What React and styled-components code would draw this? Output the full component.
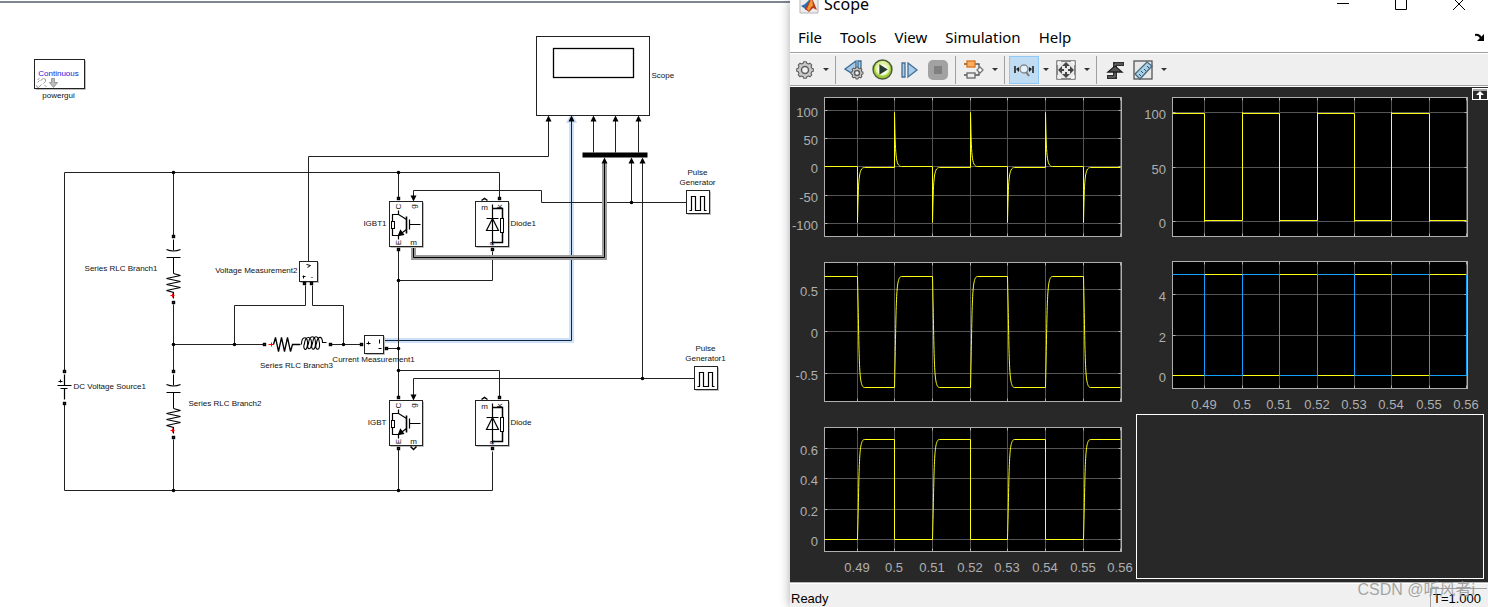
import React from 'react';
import styled, { createGlobalStyle } from 'styled-components';

const GlobalStyle = createGlobalStyle`
  * {
    box-sizing: border-box;
  }

  body {
    margin: 0;
    background: #ffffff;
    color: #000000;
    font-family: 'Noto Sans', 'Open Sans', sans-serif;
  }

  button {
    margin: 0;
    padding: 0;
    border: none;
    background: none;
    color: inherit;
    font: inherit;
  }
`;

const Desktop = styled.div`
  display: grid;
  grid-template-columns: 790fr 698fr;
  min-height: 100vh;
  overflow: hidden;
`;

const ModelPane = styled.main`
  min-width: 0;
  padding-top: 1px;
  background: #ffffff;
`;

const PaneRule = styled.div`
  height: 2px;
  background: #7e8690;
`;

const Drawing = styled.svg`
  display: block;
  width: 100%;
  height: auto;
  fill: none;
  stroke: #000000;
  stroke-width: 1;

  text {
    fill: #111111;
    stroke: none;
    font-family: 'Liberation Sans', Arial, sans-serif;
    font-size: 8px;
  }

  .mode {
    fill: #1a1ad6;
  }
`;

const ScopeWindow = styled.section`
  position: relative;
  display: flex;
  flex-direction: column;
  min-width: 0;
  background: #ffffff;
  box-shadow: 0 0 10px rgba(0, 0, 0, 0.35);
`;

const TitleBar = styled.header`
  display: flex;
  align-items: flex-start;
  height: 22px;
  padding-left: 9px;
`;

const WindowTitle = styled.h1`
  flex: 1;
  margin: 0 0 0 5px;
  font-size: 16px;
  font-weight: 400;
  line-height: 8px;
`;

const WindowButton = styled.button`
  display: flex;
  justify-content: center;
  width: 58px;
  height: 12px;
`;

const MenuBar = styled.nav`
  display: flex;
  align-items: center;
  gap: 18px;
  height: 30px;
  padding: 0 3px 0 8px;
  font-size: 15px;
`;

const MenuButton = styled.button`
  line-height: 20px;
`;

const DockButton = styled.button`
  display: flex;
  margin-left: auto;
`;

const Toolbar = styled.div`
  display: flex;
  align-items: center;
  height: 35px;
  padding-left: 1px;
  background: #efefef;
  border-top: 1px solid #a0a0a0;
  border-bottom: 1px solid #ffffff;
  box-shadow: inset 0 1px #ffffff, inset 0 -1px #a0a0a0;
`;

const ToolButton = styled.button`
  display: flex;
  align-items: center;
  justify-content: center;
  width: ${({ $active }) => ($active ? '30px' : '28px')};
  height: 28px;
  background: ${({ $active }) => ($active ? '#c0dcf3' : 'transparent')};
  border: ${({ $active }) => ($active ? '1px solid #90c8f6' : 'none')};
`;

const CaretButton = styled.button`
  width: 13px;
  height: 28px;

  &::after {
    content: '';
    display: block;
    width: 0;
    margin: 0 auto;
    border: 3px solid transparent;
    border-top-color: #333333;
    border-bottom: none;
  }
`;

const Separator = styled.span`
  width: 1px;
  height: 28px;
  margin: 0 4px 0 3px;
  background: #a0a0a0;
`;

const Displays = styled.div`
  position: relative;
  display: grid;
  flex: 1;
  grid-template-columns: 346fr 352fr;
  background: #282828;
`;

const Column = styled.div`
  display: flex;
  flex-direction: column;
  min-width: 0;
`;

const ChartSvg = styled.svg`
  display: block;
  width: 100%;
  height: auto;
  fill: none;
  stroke-width: 1;

  text {
    fill: #afafaf;
    font-family: 'Liberation Sans', Arial, sans-serif;
    font-size: 13px;
  }
`;

const EmptyDisplay = styled.div`
  flex: 1;
  margin: 0 4px 3px 0;
  border: 1px solid #ffffff;
`;

const MaximizeAxes = styled.button`
  position: absolute;
  top: 1px;
  right: 0;
  display: flex;
`;

const StatusBar = styled.footer`
  display: flex;
  align-items: stretch;
  justify-content: space-between;
  height: 25px;
  padding: 5px 1px 0;
  background: #f0f0f0;
  border-top: 1px solid #b4b4b4;
  box-shadow: inset 0 1px #ffffff;
  font-family: 'Liberation Sans', Arial, sans-serif;
  font-size: 13px;
  line-height: 22px;
`;

const StatusTime = styled.span`
  width: 57px;
  padding-left: 2px;
  border-top: 1px solid #a0a0a0;
  border-left: 1px solid #a0a0a0;
  line-height: 20px;
`;

const Watermark = styled.span`
  position: absolute;
  right: 13px;
  bottom: 5px;
  color: rgba(150, 150, 150, 0.85);
  font-family: 'Liberation Sans', 'Noto Sans CJK SC', sans-serif;
  font-size: 16px;
  line-height: 24px;
  pointer-events: none;
`;

/* ---------- model diagram ---------- */

const Dot = ({ x, y }) => <circle cx={x} cy={y} r="1.8" fill="#000" stroke="none" />;

const Port = ({ x, y }) => (
  <rect x={x - 1} y={y - 1} width="2" height="2" strokeWidth="1.4" fill="#999" />
);

const Arrow = ({ x, y, down }) => (
  <path d={down ? `M${x - 3} ${y - 6}h6l-3 6z` : `M${x - 3} ${y + 6}h6l-3 -6z`} fill="#000" stroke="none" />
);

const Box = ({ x, y, w, h }) => (
  <g>
    <path d={`M${x + 1} ${y + h + 1}h${w}v${-h}`} stroke="#bdbdbd" />
    <rect x={x} y={y} width={w} height={h} fill="#fff" stroke="#222" />
  </g>
);

const Turned = ({ x, y, children }) => (
  <text x={x} y={y} textAnchor="middle" transform={`rotate(-90 ${x} ${y})`}>{children}</text>
);

const Igbt = ({ y, open }) => (
  <g transform={`translate(389 ${y})`}>
    <Box x={0} y={0} w={33} h={45} />
    <g strokeWidth="1.2">
      <path d="M9 9v4l8 5M9 13H3v7M3 27v7h6M17 28l-8 6v4" />
      <rect x="2" y="20" width="3" height="7" strokeWidth="1" />
      <path d="M17 15v17" strokeWidth="1.6" />
      <path d="M20 18v10M20 23h11" />
      <path d="M9 34l2 -5l3 4z" fill="#000" />
    </g>
    <Turned x={11} y={5}>C</Turned>
    <Turned x={26} y={5}>g</Turned>
    <Turned x={11} y={41}>E</Turned>
    <text x="24" y="43" textAnchor="middle">m</text>
    <Port x={9} y={-3} />
    <Port x={9} y={48} />
    {open && <path d="M21 46l3 3l3 -3" strokeWidth="1.5" />}
  </g>
);

const Diode = ({ y }) => (
  <g transform={`translate(475 ${y})`}>
    <Box x={0} y={0} w={33} h={45} />
    <g strokeWidth="1.2">
      <path d="M17 3v40M11 17h12M17 17l6 12H11z" />
      <path d="M17 7h10v10M27 31v10H17" strokeWidth="1.5" />
      <rect x="25" y="17" width="3" height="14" fill="#fff" strokeWidth="1" />
    </g>
    <text x="9" y="8" textAnchor="middle">m</text>
    <Turned x={26} y={5}>k</Turned>
    <Turned x={18} y={42}>a</Turned>
    <Port x={24} y={-3} />
    <Port x={17} y={48} />
    <path d="M6 -1l3 -2l3 2" strokeWidth="1.5" />
  </g>
);

const RcBranch = ({ y }) => (
  <g transform={`translate(173 ${y})`}>
    <Port x={0} y={0} />
    <path d="M0 3v11M0 21v16" />
    <path d="M-7 13q7 3 14 0M-7 21H7" strokeWidth="1.2" />
    <path d="M0 37l7 2l-14 3l14 3l-14 3l14 3l-14 3l7 2v6" strokeWidth="1.1" />
    <path d="M-3 59h4M-1 57v4" stroke="#f00" />
    <Port x={0} y={66} />
  </g>
);

const PulseGenerator = ({ x, y }) => (
  <g transform={`translate(${x} ${y})`}>
    <Box x={0} y={0} w={23} h={23} />
    <path d="M3 20h2V6h4v14h5V6h4v14h2" strokeWidth="1.2" />
  </g>
);

const wires = [
  'M64 371V172H499V197',
  'M173 172V236M173 304V371M173 439V490',
  'M64 404V490H492V451',
  'M308 261V156H548V118',
  'M173 344H264M331 344H361',
  'M234 344V305H305V285M343 344V305H312V285',
  'M387 348H398',
  'M398 172V197M398 250V396M398 449V490',
  'M492 251V280H398',
  'M398 370H499V396',
  'M686 202H541V190H413V198',
  'M694 378H413V397',
  'M593 152V118M615 152V118M638 152V118',
  'M631 202V160M642 378V160',
];

const junctions = [
  [173, 172], [398, 172], [173, 344], [234, 344], [343, 344], [173, 490], [398, 490],
  [398, 280], [398, 348], [398, 370], [631, 202], [642, 378],
];

const labels = [
  { x: 58, y: 97, text: 'powergui', anchor: 'middle' },
  { x: 651, y: 77, text: 'Scope' },
  { x: 697, y: 174, text: 'Pulse', anchor: 'middle' },
  { x: 697, y: 184, text: 'Generator', anchor: 'middle' },
  { x: 705, y: 350, text: 'Pulse', anchor: 'middle' },
  { x: 705, y: 360, text: 'Generator1', anchor: 'middle' },
  { x: 386, y: 225, text: 'IGBT1', anchor: 'end' },
  { x: 386, y: 424, text: 'IGBT', anchor: 'end' },
  { x: 510, y: 225, text: 'Diode1' },
  { x: 510, y: 424, text: 'Diode' },
  { x: 157, y: 270, text: 'Series RLC Branch1', anchor: 'end' },
  { x: 188, y: 405, text: 'Series RLC Branch2' },
  { x: 296, y: 367, text: 'Series RLC Branch3', anchor: 'middle' },
  { x: 373, y: 361, text: 'Current Measurement1', anchor: 'middle' },
  { x: 297, y: 272, text: 'Voltage Measurement2', anchor: 'end' },
  { x: 73, y: 388, text: 'DC Voltage Source1' },
];

const ModelDiagram = () => (
  <Drawing viewBox="0 3 790 604" role="img" aria-label="Half bridge model">
    <g transform="translate(0.5 0.5)">
      <path d="M384 340H571V120" stroke="#cce0fa" strokeWidth="5" />
      <path d="M566 122l5 -9l5 9z" fill="#cce0fa" stroke="#cce0fa" />
      <path d="M384 340H571V118" stroke="#10263f" />
      {wires.map((d) => <path key={d} d={d} stroke="#222" />)}
      <path d="M413 247V257H604V163" stroke="#9c9c9c" strokeWidth="5" />
      <path d="M413 247V257H604V158" />
      {junctions.map(([x, y]) => <Dot key={`${x}-${y}`} x={x} y={y} />)}

      <Box x={34} y={59} w={50} h={29} />
      <text className="mode" x="58" y="75" textAnchor="middle">Continuous</text>
      <g stroke="#999">
        <path d="M37 79l2 -1M36 85q0 2 2 2l3 -3M40 80l3 -2q3 0 2 3l-2 2M44 85l2 1M37 82l2 -2" />
        <path d="M51 78h3v4h3l-4 5l-4 -5h2z" fill="#bbb" />
      </g>

      <rect x="536" y="36" width="113" height="79" stroke="#222" fill="#fff" />
      <rect x="553" y="48" width="80" height="29" strokeWidth="1.3" />
      <rect x="582" y="152" width="65" height="5" fill="#000" stroke="none" />
      {[548, 571, 593, 615, 638].map((x) => <Arrow key={x} x={x} y={115} />)}
      {[604, 631, 642].map((x) => <Arrow key={x} x={x} y={157} />)}
      <Arrow x={413} y={201} down />
      <Arrow x={413} y={400} down />

      <Igbt y={201} />
      <Igbt y={400} open />
      <Diode y={201} />
      <Diode y={400} />
      <PulseGenerator x={686} y={190} />
      <PulseGenerator x={694} y={366} />
      <RcBranch y={236} />
      <RcBranch y={371} />

      <Port x={64} y={371} />
      <Port x={64} y={403} />
      <path d="M64 374V385M57 385H71M60 388H67M64 388V399" strokeWidth="1.2" />
      <path d="M58 381h4M60 379v3" />

      <Port x={264} y={344} />
      <path d="M268 344h5M271 342v4" stroke="#f00" />
      <path d="M273 344l2 -7l3 14l3 -14l3 14l3 -14l3 14l2 -7h8" strokeWidth="1.3" />
      <path
        d="M301 344c0 -9 7 -9 6 0s-5 4 -3 -1c1 -8 7 -8 7 0s-6 6 -3 0c1 -9 7 -9 7 0s-6 6 -3 0c1 -9 6 -9 7 0s-6 6 -3 0c1 -8 6 -8 6 -1h4"
        strokeWidth="1.1"
      />
      <Port x={330} y={344} />

      <Box x={299} y={261} w={18} h={20} />
      <path d="M306 264l4 1l-3 2M302 276h3M303 275v3M311 277h1" />
      <Port x={304} y={283} />
      <Port x={311} y={283} />
      <Box x={364} y={335} w={19} h={18} />
      <path d="M366 343h4M368 341v3M379 339v4M378 348h3" />
      <Port x={361} y={344} />
      <Port x={386} y={348} />

      {labels.map(({ x, y, text, anchor }) => (
        <text key={`${x}-${y}`} x={x} y={y} textAnchor={anchor || 'start'}>{text}</text>
      ))}
    </g>
  </Drawing>
);

/* ---------- scope charts ---------- */

const TIME_LABELS = ['0.49', '0.5', '0.51', '0.52', '0.53', '0.54', '0.55', '0.56'];
const LEFT_TICKS = [67, 104, 142, 180, 217, 255, 293, 330];
const RIGHT_TICKS = [68, 106, 143, 181, 218, 255, 293, 330];

// joins one segment per switching instant, the last tick only closes the trace
const trace = (start, ticks, even, odd) =>
  start + ticks.slice(0, -1).map((x, i) => (i % 2 ? odd : even)(x)).join('') + `H${ticks[7]}`;

const commutation = trace('M34 79', LEFT_TICKS,
  (x) => `H${x}V135C${x + 1} 92 ${x + 1} 80 ${x + 7} 80`,
  (x) => `H${x}V25C${x + 1} 68 ${x + 1} 79 ${x + 7} 79`);

const loadCurrent = trace('M34 24', LEFT_TICKS,
  (x) => `H${x}C${x + 2} 110 ${x + 1} 135 ${x + 7} 135`,
  (x) => `H${x}C${x + 2} 49 ${x + 1} 24 ${x + 7} 24`);

const switchCurrent = trace('M34 122', LEFT_TICKS,
  (x) => `H${x}C${x + 2} 47 ${x + 1} 22 ${x + 7} 22`,
  (x) => `H${x}V122`);

const switchVoltage = trace('M36 26', RIGHT_TICKS,
  (x) => `H${x}V134V133`,
  (x) => `H${x}V25V26`);

const gateA = trace('M36 123', RIGHT_TICKS, (x) => `H${x}V22`, (x) => `H${x}V123`);
const gateB = trace('M36 22', RIGHT_TICKS, (x) => `H${x}V123`, (x) => `H${x}V22`) + 'V22';

const Chart = ({ title, width, height, left, top, bottom, xTicks, yTicks, series, timeAxis }) => {
  const right = 331;
  return (
    <ChartSvg viewBox={`0 0 ${width} ${height}`} role="img" aria-label={title}>
      <g transform="translate(0.5 0.5)">
        <rect x={left} y={top} width={right - left} height={bottom - top} fill="#000" />
        {xTicks.map((x) => <path key={x} d={`M${x} ${top}V${bottom}`} stroke="#555" />)}
        {yTicks.map(([, y]) => <path key={y} d={`M${left} ${y}H${right}`} stroke="#555" />)}
        {xTicks.map((x) => (
          <path key={x} d={`M${x} ${top}v3M${x} ${bottom}v-3`} stroke="#afafaf" />
        ))}
        {yTicks.map(([, y]) => (
          <path key={y} d={`M${left} ${y}h3M${right} ${y}h-3`} stroke="#afafaf" />
        ))}
        <rect x={left} y={top} width={right - left} height={bottom - top} stroke="#afafaf" />
        {series.map(({ d, color }) => <path key={color} d={d} stroke={color} />)}
      </g>
      {yTicks.map(([label, y]) => (
        <text key={label} x={left - 6} y={y + 7} textAnchor="end">{label}</text>
      ))}
      {timeAxis && xTicks.map((x, i) => (
        <text key={x} x={x} y={bottom + 21} textAnchor="middle">{TIME_LABELS[i]}</text>
      ))}
    </ChartSvg>
  );
};

const YELLOW = '#ffff11';
const BLUE = '#139fff';

const leftCharts = [
  {
    title: 'Diode current', top: 10, bottom: 149,
    yTicks: [['100', 23], ['50', 51], ['0', 79], ['-50', 108], ['-100', 136]],
    series: [{ d: commutation, color: YELLOW }],
  },
  {
    title: 'Load current', top: 10, bottom: 149,
    yTicks: [['0.5', 37], ['0', 79], ['-0.5', 121]],
    series: [{ d: loadCurrent, color: YELLOW }],
  },
  {
    title: 'Switch current', top: 10, bottom: 134, timeAxis: true,
    yTicks: [['0.6', 31], ['0.4', 61], ['0.2', 92], ['0', 122]],
    series: [{ d: switchCurrent, color: YELLOW }],
  },
];

/* ---------- icons ---------- */

const Icon = ({ size = 20, children }) => (
  <svg width={size} height={size} viewBox="0 0 20 20" fill="none" strokeWidth="1.3" aria-hidden="true">
    {children}
  </svg>
);

const gearOutline = (cx, cy, r) => {
  const points = [];
  for (let tooth = 0; tooth < 8; tooth += 1) {
    [[-15, 1], [-9, 1.2], [9, 1.2], [15, 1]].forEach(([offset, scale]) => {
      const angle = ((tooth * 45 + offset) * Math.PI) / 180;
      points.push(`${(cx + Math.sin(angle) * r * scale).toFixed(2)},${(cy - Math.cos(angle) * r * scale).toFixed(2)}`);
    });
  }
  return points.join(' ');
};

const Gear = ({ cx, cy, r }) => (
  <g stroke="#5f5f5f">
    <polygon points={gearOutline(cx, cy, r)} fill="#c9c9c9" strokeWidth="1.1" strokeLinejoin="round" />
    <circle cx={cx} cy={cy} r={r / 2} fill="#f2f2f2" strokeWidth="1.5" />
  </g>
);

const MatlabIcon = () => (
  <svg width="20" height="14" viewBox="0 6 20 14" aria-hidden="true">
    <path d="M1 6v13h18V6" fill="#ececec" stroke="#b5b5b5" />
    <path d="M2 12l4 -2l5 -5v7l-4 4l-2 -2z" fill="#2f6eae" />
    <path d="M6 15l5 -9l2 -2l5 12l-4 -2l-4 4z" fill="#b93a1c" />
    <path d="M11 8l2 -5l1 9l-2 1l-2 4l-2 -2z" fill="#f29a35" />
  </svg>
);

const StepBackIcon = () => (
  <Icon>
    <path d="M1 9L12 1v15z" fill="#a9cbe8" stroke="#3b6d96" />
    <path d="M14 1h3v10h-3z" fill="#a9cbe8" stroke="#3b6d96" />
    <Gear cx={13} cy={13} r={5} />
  </Icon>
);

const RunIcon = () => (
  <Icon size={21}>
    <circle cx="10" cy="10" r="9" fill="#9ccb3c" stroke="#4e5b3b" strokeWidth="1.4" />
    <circle cx="10" cy="9" r="7" fill="#dff0a0" />
    <circle cx="10" cy="10" r="5" fill="#f6fbe2" />
    <path d="M7 5l8 5l-8 5z" fill="#263b30" />
  </Icon>
);

const StepIcon = () => (
  <Icon>
    <path d="M2 3h3v14H2zM8 3l9 7l-9 7z" fill="#a6cdec" stroke="#456f96" />
  </Icon>
);

const StopIcon = () => (
  <Icon>
    <rect width="20" height="20" rx="5" fill="#a2a2a2" />
    <rect x="6" y="6" width="8" height="8" fill="#808080" />
  </Icon>
);

const BlocksIcon = () => (
  <Icon>
    <path d="M0 4h3M11 4h4v4M11 15h4v-3M0 15h3" stroke="#555" />
    <path d="M0 4h3" stroke="#d26b15" />
    <rect x="3" y="1" width="8" height="6" fill="#f9b065" stroke="#d9701a" />
    <rect x="3" y="13" width="8" height="5" fill="#eeeeee" stroke="#666" />
    <path d="M16 7l3 3l-3 3l-3 -3z" fill="#fff" stroke="#777" />
  </Icon>
);

const ZoomXIcon = () => (
  <Icon>
    <path d="M1 6v7M19 6v7" stroke="#222" strokeWidth="1.6" />
    <path d="M2 9l3 -2v5zM18 9l-3 -2v5z" fill="#222" />
    <circle cx="10" cy="9" r="4" fill="#e5f1fb" stroke="#8a8a8a" strokeWidth="1.4" />
    <path d="M12 12l3 4" stroke="#777" strokeWidth="2" />
  </Icon>
);

const FitIcon = () => (
  <Icon>
    <rect x="1" y="1" width="18" height="18" fill="#e9e9e9" stroke="#555" />
    <path d="M5 2H2v3M15 2h3v3M5 18H2v-3M15 18h3v-3" stroke="#fff" />
    <path d="M10 2l4 4h-3v2H9V6H6zM10 18l4 -4h-3v-2H9v2H6zM2 10l4 -4v3h2v2H6v3zM18 10l-4 -4v3h-2v2h2v3z" fill="#444" />
  </Icon>
);

const TriggerIcon = () => (
  <Icon>
    <path d="M2 17h8V4h9" stroke="#2f2f2f" strokeWidth="4" />
    <path d="M3 17h7V4h8" stroke="#808080" strokeWidth="1" />
    <path d="M3 12l7 -6l7 6z" fill="#555" stroke="#222" />
  </Icon>
);

const RulerIcon = () => (
  <Icon>
    <rect x="1" y="1" width="18" height="18" fill="#e8e8e8" stroke="#555" />
    <path d="M2 14L14 2l5 4L7 19z" fill="#a9d0e6" stroke="#44697f" />
    <path d="M8 16l-2 -2M10 13l-2 -2M13 11l-2 -2M16 8l-2 -2" stroke="#2c5068" strokeWidth="1" />
  </Icon>
);

const App = () => (
  <>
    <GlobalStyle />
    <Desktop>
      <ModelPane>
        <PaneRule />
        <ModelDiagram />
      </ModelPane>

      <ScopeWindow>
        <TitleBar>
          <MatlabIcon />
          <WindowTitle>Scope</WindowTitle>
          <WindowButton aria-label="Minimize">
            <svg width="12" height="10" stroke="#000"><path d="M0 3.5h12" /></svg>
          </WindowButton>
          <WindowButton aria-label="Maximize">
            <svg width="12" height="10" stroke="#000" fill="none"><path d="M.5 0v9.500h11V0" /></svg>
          </WindowButton>
          <WindowButton aria-label="Close">
            <svg width="12" height="10" stroke="#000"><path d="M0 10L10 0M12 10L2 0" /></svg>
          </WindowButton>
        </TitleBar>

        <MenuBar>
          {['File', 'Tools', 'View', 'Simulation', 'Help'].map((name) => (
            <MenuButton key={name}>{name}</MenuButton>
          ))}
          <DockButton aria-label="Dock">
            <svg width="10" height="9" viewBox="0 0 10 9">
              <path d="M0 2q4 -1 6 3" fill="none" stroke="#000" strokeWidth="2" />
              <path d="M9 1v7H2z" fill="#000" />
            </svg>
          </DockButton>
        </MenuBar>

        <Toolbar>
          <ToolButton aria-label="Configuration"><Icon><Gear cx={10} cy={10} r={7} /></Icon></ToolButton>
          <CaretButton aria-label="Configuration menu" />
          <Separator />
          <ToolButton aria-label="Step back"><StepBackIcon /></ToolButton>
          <ToolButton aria-label="Run"><RunIcon /></ToolButton>
          <ToolButton aria-label="Step forward"><StepIcon /></ToolButton>
          <ToolButton aria-label="Stop"><StopIcon /></ToolButton>
          <Separator />
          <ToolButton aria-label="Highlight block"><BlocksIcon /></ToolButton>
          <CaretButton aria-label="Highlight menu" />
          <Separator />
          <ToolButton aria-label="Zoom X" $active><ZoomXIcon /></ToolButton>
          <CaretButton aria-label="Zoom menu" />
          <ToolButton aria-label="Scale axes"><FitIcon /></ToolButton>
          <CaretButton aria-label="Scale menu" />
          <Separator />
          <ToolButton aria-label="Triggers"><TriggerIcon /></ToolButton>
          <ToolButton aria-label="Cursor measurements"><RulerIcon /></ToolButton>
          <CaretButton aria-label="Measurements menu" />
        </Toolbar>

        <Displays>
          <Column>
            {leftCharts.map((chart) => (
              <Chart key={chart.title} width={346} height={165} left={34} xTicks={LEFT_TICKS} {...chart} />
            ))}
          </Column>
          <Column>
            <Chart
              title="Switch voltage" width={352} height={165} left={36} top={10} bottom={149}
              xTicks={RIGHT_TICKS}
              yTicks={[['100', 25], ['50', 80], ['0', 134]]}
              series={[{ d: switchVoltage, color: YELLOW }]}
            />
            <Chart
              title="Gate pulses" width={352} height={162} left={36} top={9} bottom={136} timeAxis
              xTicks={RIGHT_TICKS}
              yTicks={[['4', 42], ['2', 83], ['0', 123]]}
              series={[{ d: gateA, color: YELLOW }, { d: gateB, color: BLUE }]}
            />
            <EmptyDisplay />
          </Column>
          <MaximizeAxes aria-label="Maximize axes">
            <svg width="16" height="12" viewBox="0 0 16 12">
              <rect x=".5" y=".5" width="15" height="11" fill="#282828" stroke="#fff" />
              <path d="M1 2h14" stroke="#aaa" strokeWidth="2" />
              <path d="M8 3l4 4H9v4H7V7H4z" fill="#fff" />
            </svg>
          </MaximizeAxes>
        </Displays>

        <StatusBar>
          <span>Ready</span>
          <StatusTime>T=1.000</StatusTime>
        </StatusBar>
        <Watermark>CSDN @听风者i</Watermark>
      </ScopeWindow>
    </Desktop>
  </>
);

export default App;
